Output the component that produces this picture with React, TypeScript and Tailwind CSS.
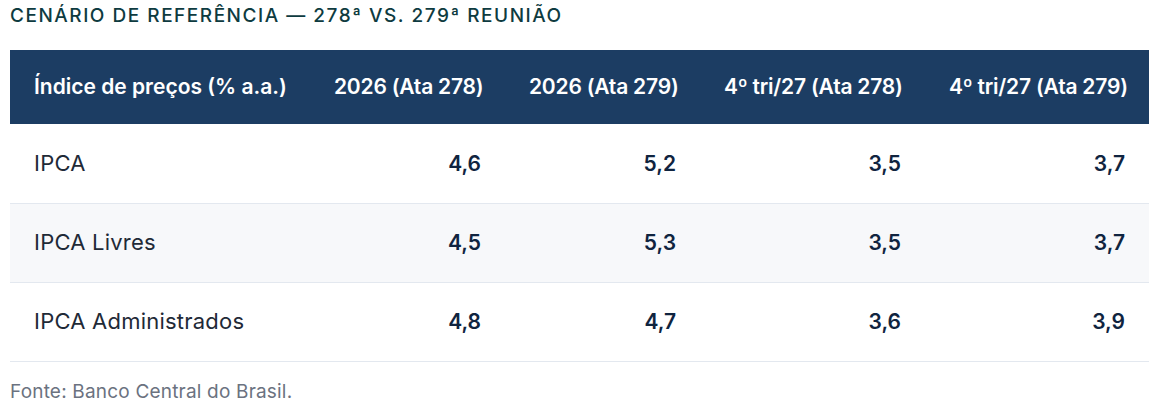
const rows = [
  { label: "IPCA", values: ["4,6", "5,2", "3,5", "3,7"] },
  { label: "IPCA Livres", values: ["4,5", "5,3", "3,5", "3,7"] },
  { label: "IPCA Administrados", values: ["4,8", "4,7", "3,6", "3,9"] },
];

const headers = ["2026 (Ata 278)", "2026 (Ata 279)", "4º tri/27 (Ata 278)", "4º tri/27 (Ata 279)"];

export default function App() {
  return (
    <div
      className="w-[1159px] h-[408px] bg-white px-[10px] pt-[3px]"
      style={{ fontFamily: "Inter, 'Noto Sans', sans-serif" }}
    >
      <h2 className="text-[19px] leading-[26px] font-medium tracking-[0.08em] text-[#0e3b40]">
        CENÁRIO DE REFERÊNCIA — 278ª VS. 279ª REUNIÃO
      </h2>

      <table className="mt-[21px] w-[1139px] table-fixed border-collapse">
        <colgroup>
          <col className="w-[300px]" />
          <col className="w-[195px]" />
          <col className="w-[195px]" />
          <col className="w-[225px]" />
          <col className="w-[224px]" />
        </colgroup>
        <thead>
          <tr className="h-[74px] bg-[#1c3d63] text-white">
            <th className="px-6 text-left text-[21px] font-semibold tracking-[0em] whitespace-nowrap">
              Índice de preços (% a.a.)
            </th>
            {headers.map((h) => (
              <th key={h} className="px-6 text-right text-[21px] font-semibold tracking-[-0.01em] whitespace-nowrap">
                {h}
              </th>
            ))}
          </tr>
        </thead>
        <tbody>
          {rows.map((r, i) => (
            <tr
              key={r.label}
              className={`h-[79px] border-b border-[#e3e8ef] ${i === 1 ? "bg-[#f7f8fa]" : "bg-white"}`}
            >
              <td className="px-6 text-left text-[22px] tracking-[0.01em] text-[#1f2a37]">{r.label}</td>
              {r.values.map((v, j) => (
                <td key={j} className="px-6 text-right text-[21px] font-semibold text-[#10243f]">
                  {v}
                </td>
              ))}
            </tr>
          ))}
        </tbody>
      </table>

      <p className="mt-[16px] text-[19px] tracking-[0.01em] text-[#6b7280]">Fonte: Banco Central do Brasil.</p>
    </div>
  );
}
